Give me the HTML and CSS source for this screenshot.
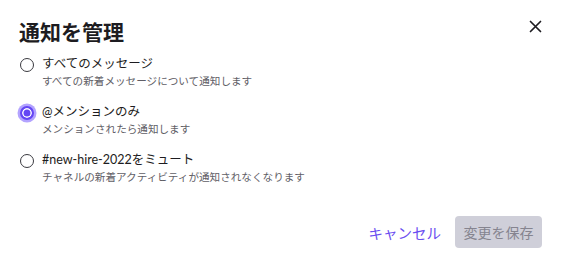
FILE: index.html
```html
<!DOCTYPE html>
<html lang="ja">
<head>
  <meta charset="UTF-8" />
  <meta name="viewport" content="width=device-width, initial-scale=1.0"/>
  <title>通知を管理</title>
  <link rel="stylesheet" href="styles.css">
</head>
<body>
  <div class="dialog">
    <div class="header">
      <h1>通知を管理</h1>
      <button class="close" aria-label="閉じる">
        <svg width="13" height="13" viewBox="0 0 13 13">
          <path d="M1.5 1.5L11.5 11.5M11.5 1.5L1.5 11.5" stroke="#1d1c21" stroke-width="1.7" stroke-linecap="round"/>
        </svg>
      </button>
    </div>

    <div class="options">
      <label class="option">
        <span class="radio"></span>
        <span class="text">
          <span class="label">すべてのメッセージ</span>
          <span class="desc">すべての新着メッセージについて通知します</span>
        </span>
      </label>
      <label class="option">
        <span class="radio checked"></span>
        <span class="text">
          <span class="label">@メンションのみ</span>
          <span class="desc">メンションされたら通知します</span>
        </span>
      </label>
      <label class="option">
        <span class="radio"></span>
        <span class="text">
          <span class="label">#new-hire-2022をミュート</span>
          <span class="desc">チャネルの新着アクティビティが通知されなくなります</span>
        </span>
      </label>
    </div>

    <div class="footer">
      <button class="cancel">キャンセル</button>
      <button class="save" disabled>変更を保存</button>
    </div>
  </div>
</body>
</html>
```

FILE: styles.css
```css
body {
  margin: 0;
  background: #ffffff;
  font-family: "Lato", "Noto Sans CJK JP", "Noto Sans", sans-serif;
  color: #1d1c21;
}
.dialog {
  padding: 16px 19px 0 19px;
}
.header {
  display: flex;
  justify-content: space-between;
  align-items: flex-start;
}
h1 {
  margin: 0;
  font-size: 21px;
  line-height: 32px;
  font-weight: 700;
}
.close {
  background: none;
  border: none;
  padding: 0;
  margin-top: 3px;
  width: 14px;
  height: 14px;
  display: flex;
  align-items: center;
  justify-content: center;
}
.options {
  margin-top: 7px;
  display: flex;
  flex-direction: column;
  gap: 13px;
}
.option {
  display: flex;
  align-items: flex-start;
  gap: 8px;
}
.radio {
  box-sizing: border-box;
  width: 14px;
  height: 14px;
  margin-top: 3px;
  margin-left: 1px;
  border: 1.3px solid #3a3a40;
  border-radius: 50%;
  flex-shrink: 0;
}
.radio.checked {
  border: 2px solid #6446f4;
  background: #6446f4;
  box-shadow: inset 0 0 0 1.5px #ffffff, 0 0 0 2.5px #b3a3ff;
}
.text {
  display: flex;
  flex-direction: column;
}
.label {
  font-size: 12.5px;
  line-height: 18px;
}
.desc {
  font-size: 10.6px;
  line-height: 17px;
  color: #5f5e66;
}
.footer {
  display: flex;
  justify-content: flex-end;
  align-items: center;
  gap: 14px;
  margin-top: 30px;
}
.cancel {
  background: none;
  border: none;
  padding: 0;
  font-family: inherit;
  font-size: 14.5px;
  color: #6b4ef0;
}
.save {
  font-family: inherit;
  font-size: 14px;
  width: 87px;
  height: 32px;
  border: none;
  border-radius: 4px;
  background: #cfcfd9;
  color: #85848f;
}
```
